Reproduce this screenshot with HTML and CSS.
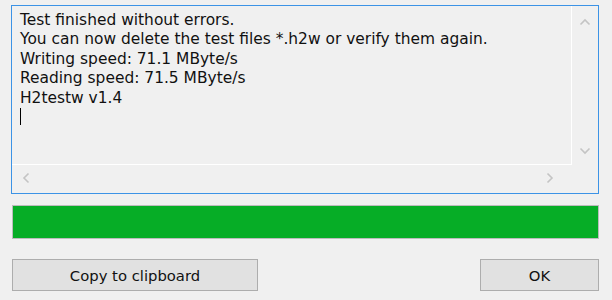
FILE: index.html
```html
<html lang="en">
<head>
    <title>H2testw</title>
    <meta name="viewport" content="width=device-width, initial-scale=1">
    <link rel="stylesheet" href="styles.css">
</head>
<body>
    <div class="dialog">
        <div class="log">
            <div class="log-text">
                <p>Test finished without errors.</p>
                <p>You can now delete the test files *.h2w or verify them again.</p>
                <p>Writing speed: 71.1 MByte/s</p>
                <p>Reading speed: 71.5 MByte/s</p>
                <p>H2testw v1.4</p>
                <p><span class="caret"></span></p>
            </div>
            <div class="vscroll">
                <svg width="12" height="8" viewBox="0 0 12 8"><path d="M1.5 6.5 L6 2 L10.5 6.5" fill="none" stroke="#c4c4c4" stroke-width="1.6"/></svg>
                <svg width="12" height="8" viewBox="0 0 12 8"><path d="M1.5 1.5 L6 6 L10.5 1.5" fill="none" stroke="#c4c4c4" stroke-width="1.6"/></svg>
            </div>
            <div class="hscroll">
                <svg width="8" height="12" viewBox="0 0 8 12"><path d="M6.5 1.5 L2 6 L6.5 10.5" fill="none" stroke="#c4c4c4" stroke-width="1.6"/></svg>
                <svg width="8" height="12" viewBox="0 0 8 12"><path d="M1.5 1.5 L6 6 L1.5 10.5" fill="none" stroke="#c4c4c4" stroke-width="1.6"/></svg>
            </div>
            <div class="corner"></div>
        </div>

        <div class="progress"></div>

        <div class="buttons">
            <button type="button" class="btn-copy">Copy to clipboard</button>
            <button type="button" class="btn-ok">OK</button>
        </div>
    </div>
</body>
</html>
```

FILE: styles.css
```css
body {
    margin: 0;
    background: #f0f0f0;
    font-family: "DejaVu Sans", sans-serif;
    color: #111111;
}

.dialog {
    display: flex;
    flex-direction: column;
    padding: 5px 13px 0 11px;
}

.log {
    display: grid;
    grid-template-columns: 1fr 26px;
    grid-template-rows: 159px 27px;
    height: 189px;
    box-sizing: border-box;
    border: 1px solid #3c93e6;
}

.log-text {
    border-right: 1px solid #ffffff;
    border-bottom: 1px solid #ffffff;
    padding: 5px 0 0 8px;
    font-size: 15.45px;
    line-height: 19.4px;
    overflow: hidden;
}

.log-text p {
    margin: 0;
    white-space: nowrap;
}

.caret {
    display: inline-block;
    width: 1px;
    height: 17px;
    background: #000;
    vertical-align: -3px;
}

.vscroll {
    display: flex;
    flex-direction: column;
    justify-content: space-between;
    align-items: center;
    padding: 12px 0 10px 0;
}

.hscroll {
    display: flex;
    justify-content: space-between;
    align-items: center;
    padding: 0 18px 2px 10px;
}

.progress {
    margin-top: 11px;
    height: 34px;
    box-sizing: border-box;
    margin-left: 1px;
    border: 1px solid #bcbcbc;
    background: #06ad26;
}

.buttons {
    display: flex;
    justify-content: space-between;
    margin-top: 20px;
    padding-left: 1px;
}

button {
    height: 32px;
    box-sizing: border-box;
    border: 1px solid #adadad;
    background: #e1e1e1;
    font-family: "DejaVu Sans", sans-serif;
    font-size: 14.8px;
    color: #111111;
    padding: 0;
}

.btn-copy {
    width: 246px;
}

.btn-ok {
    width: 119px;
}
```
